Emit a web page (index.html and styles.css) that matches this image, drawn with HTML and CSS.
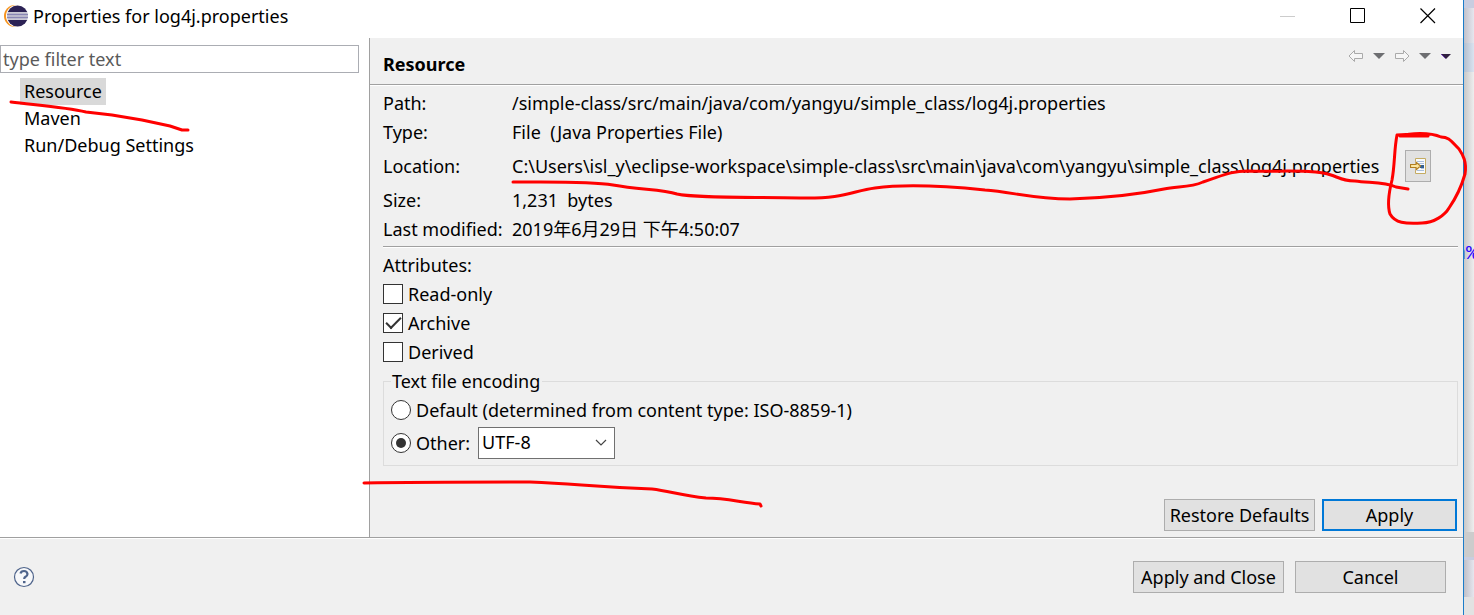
FILE: index.html
```
<!DOCTYPE html>
<html lang="en">

<head>
    <meta charset="UTF-8">
    <meta name="viewport" content="width=device-width, initial-scale=1.0">
    <title>Properties for log4j.properties</title>
    <link rel="stylesheet" href="styles.css">
</head>

<body>
    <div class="dialog">
        <!-- Title bar -->
        <header class="title-bar">
            <svg class="logo" width="24" height="24" viewBox="0 0 24 24">
                <circle cx="11" cy="12" r="11" fill="#f7941e"/>
                <circle cx="13" cy="12" r="11" fill="#fff"/>
                <circle cx="13.5" cy="12" r="10.5" fill="#2c2255"/>
                <path d="M3 9h21M3 12h21M3 15h21" stroke="#fff" stroke-width="1.5"/>
                <path d="M3 10.5h21M3 13.5h21" stroke="#8a86b4" stroke-width="1.5"/>
            </svg>
            <span class="title">Properties for log4j.properties</span>
            <button class="window-button" aria-label="Minimize" disabled>
                <svg width="16" height="16"><path d="M0 8.500h15" stroke="#ccc"/></svg>
            </button>
            <button class="window-button" aria-label="Maximize">
                <svg width="16" height="16"><path d="M.5 .5h14v14H.5z" fill="none" stroke="#000"/></svg>
            </button>
            <button class="window-button" aria-label="Close">
                <svg width="16" height="16"><path d="M.5 .5l14.5 14.5M15 .5L.5 15" stroke="#000" stroke-width="1.2"/></svg>
            </button>
        </header>

        <div class="main">
            <!-- Page list -->
            <nav class="sidebar">
                <input class="filter" type="text" placeholder="type filter text" aria-label="Filter">
                <ul class="tree">
                    <li><a class="selected" href="#">Resource</a></li>
                    <li><a href="#">Maven</a></li>
                    <li><a href="#">Run/Debug Settings</a></li>
                </ul>
            </nav>

            <!-- Resource page -->
            <section class="page">
                <div class="page-header">
                    <h1>Resource</h1>
                    <div class="history">
                        <button aria-label="Back" disabled>
                            <svg width="16" height="14"><path d="M1 7l5.500-5.500v3h8v5h-8v3z" fill="#f6f6f6" stroke="#aaa"/></svg>
                        </button>
                        <button aria-label="Back history" disabled>
                            <svg width="12" height="14"><path d="M0 4h12L6 10z" fill="#6d6e71"/></svg>
                        </button>
                        <button aria-label="Forward" disabled>
                            <svg width="16" height="14"><path d="M15 7L9.500 1.500v3h-8v5h8v3z" fill="#f6f6f6" stroke="#aaa"/></svg>
                        </button>
                        <button aria-label="Forward history" disabled>
                            <svg width="12" height="14"><path d="M0 4h12L6 10z" fill="#6d6e71"/></svg>
                        </button>
                        <button aria-label="Menu">
                            <svg width="12" height="14"><path d="M1 5h10L6 10z" fill="#30203f"/><path d="M1 5l4.500 4.500" stroke="#6a35b0"/></svg>
                        </button>
                    </div>
                </div>

                <div class="page-body">
                    <dl class="info">
                        <dt>Path:</dt>
                        <dd>/simple-class/src/main/java/com/yangyu/simple_class/log4j.properties</dd>
                        <dt>Type:</dt>
                        <dd>File&nbsp; (Java Properties File)</dd>
                        <dt class="location">Location:</dt>
                        <dd class="location">
                            <span class="location-path">C:\Users\isl_y\eclipse-workspace\simple-class\src\main\java\com\yangyu\simple_class\log4j.properties</span>
                            <button class="button show-button" aria-label="Show in system explorer">
                                <svg width="16" height="16" viewBox="0 0 16 16">
                                    <path d="M5.500 3V.5h10v15h-10V13" fill="#f8fafc" stroke="#c5ac62"/>
                                    <path d="M7 3.500h7M8 5.500h6M11 10.500h3M7 12.500h7" stroke="#a9bfdc"/>
                                    <path d="M10 7h4v3h-4z" fill="#315f91"/>
                                    <path d="M.5 6.500H6V4l4.500 4-4.500 4V9.500H.5z" fill="#fce6a0" stroke="#b17d20" stroke-width="1.2"/>
                                </svg>
                            </button>
                        </dd>
                        <dt>Size:</dt>
                        <dd>1,231&nbsp; bytes</dd>
                        <dt>Last modified:</dt>
                        <dd>2019年6月29日 下午4:50:07</dd>
                    </dl>

                    <div class="attributes">
                        <div>Attributes:</div>
                        <label><input type="checkbox">Read-only</label>
                        <label><input type="checkbox" checked>Archive</label>
                        <label><input type="checkbox">Derived</label>
                    </div>

                    <fieldset class="encoding">
                        <legend>Text file encoding</legend>
                        <label><input type="radio" name="encoding">Default (determined from content type: ISO-8859-1)</label>
                        <div class="other">
                            <label><input type="radio" name="encoding" checked>Other:</label>
                            <div class="combo">
                                <select aria-label="Encoding">
                                    <option>UTF-8</option>
                                </select>
                                <svg class="chevron" width="12" height="8"><path d="M1 1l5 5 5-5" fill="none" stroke="#444" stroke-width="1.2"/></svg>
                            </div>
                        </div>
                    </fieldset>

                    <div class="page-buttons">
                        <button class="button">Restore Defaults</button>
                        <button class="button primary">Apply</button>
                    </div>
                </div>
            </section>
        </div>

        <!-- Dialog buttons -->
        <footer class="footer">
            <button class="help" aria-label="Help">
                <svg width="22" height="22" viewBox="0 0 22 22">
                    <circle cx="11" cy="11" r="9.5" fill="#f7f8fa" stroke="#4f648b" stroke-width="1.2"/>
                    <path d="M7.500 7.500Q8 5 11 5t3.500 3q0 1.500-2 2.800-1.300.8-1.300 2.200" fill="none" stroke="#4f648b" stroke-width="2.2"/>
                    <path d="M10 15h2.500v2.200H10z" fill="#4f648b"/>
                </svg>
            </button>
            <button class="button">Apply and Close</button>
            <button class="button">Cancel</button>
        </footer>
    </div>

    <!-- Editor window behind the dialog -->
    <div class="editor">
        <div class="editor-toolbar"></div>
        <div class="editor-tabs"></div>
        <div class="editor-code"><span>n%</span></div>
        <div class="editor-scroll"></div>
        <div class="editor-status"></div>
    </div>

    <!-- Red pen marks -->
    <svg class="marks" width="1474" height="615" viewBox="0 0 1474 615">
        <path d="M11 102C35 105 65 107 86 112L112 115L142 120L170 126L182 130L188 130"/>
        <path d="M513 182C548 182 590 181 613 185C640 190 662 189 677 194C695 198 740 197 800 198C845 199 852 191 875 188C905 184 945 186 985 190C1012 192 1034 199 1070 199C1108 198 1140 194 1164 189C1177 186 1190 188 1203 182C1222 176 1230 171 1248 171C1280 172 1315 169 1331 175C1342 179 1345 181 1355 181C1370 183 1385 182 1396 187L1408 189"/>
        <path d="M1428 136C1415 136 1412 133 1397 135C1394 150 1395 164 1392 180C1388 196 1388 208 1390 214C1395 223 1405 224 1422 223C1434 223 1445 215 1449 208C1456 198 1461 188 1465 174C1467 162 1463 155 1459 149C1451 141 1449 137 1441 137C1430 132 1410 133 1400 136L1428 136"/>
        <path d="M364 483C420 482 480 482 530 482C580 484 590 487 652 489C670 491 682 496 706 498C728 498 742 503 760 504L761 506"/>
    </svg>
</body>

</html>
```
FILE: styles.css
```
* {
    box-sizing: border-box;
}

body {
    font-family: "Noto Sans", "Noto Sans CJK SC", sans-serif;
    font-size: 18px;
    line-height: 24px;
    color: #000;
    margin: 0;
    min-height: 100vh;
    display: flex;
    position: relative;
    overflow: hidden;
}

button, input, select {
    font: inherit;
    color: inherit;
}

button {
    border: none;
    background: none;
    padding: 0;
}

svg {
    display: block;
}

.dialog {
    flex: 1;
    min-width: 0;
    display: flex;
    flex-direction: column;
    background: #f0f0f0;
    border-right: 1px solid #1c7cc9;
}

/* Title bar */
.title-bar {
    height: 38px;
    display: flex;
    align-items: center;
    background: #fff;
    padding: 0 0 7px 4px;
}

.title {
    flex: 1;
    padding-left: 5px;
}

.window-button {
    width: 70px;
    display: flex;
    justify-content: center;
}

.main {
    flex: 1;
    display: flex;
}

/* Page list */
.sidebar {
    width: 370px;
    background: #fff;
    border-right: 1px solid #a0a0a0;
    padding: 7px 10px 0 0;
}

.filter {
    display: block;
    width: 100%;
    height: 28px;
    border: 1px solid #abadb3;
    padding: 0 2px;
}

.filter::placeholder {
    color: #5a5a5a;
}

.tree {
    list-style: none;
    margin: 5px 0 0;
    padding: 0 0 0 20px;
}

.tree a {
    display: inline-block;
    padding: 0 4px;
    line-height: 27px;
    vertical-align: top;
    color: #000;
    text-decoration: none;
}

.tree .selected {
    background: #d9d9d9;
}

/* Resource page */
.page {
    flex: 1;
    min-width: 0;
    display: flex;
    flex-direction: column;
}

.page-header {
    height: 48px;
    display: flex;
    justify-content: space-between;
    padding: 0 11px 0 13px;
    border-bottom: 1px solid #fff;
    box-shadow: inset 0 -1px #a0a0a0;
}

.page-header h1 {
    margin: 0;
    font-size: 18px;
    line-height: 52px;
}

.history {
    display: flex;
    gap: 9px;
    padding-top: 11px;
    align-items: flex-start;
}

.page-body {
    flex: 1;
    display: flex;
    flex-direction: column;
    padding: 5px 5px 6px 13px;
}

.info {
    display: grid;
    grid-template-columns: 124px 1fr;
    column-gap: 5px;
    row-gap: 5px;
    margin: 0;
    padding-bottom: 5px;
    border-bottom: 1px solid #a0a0a0;
    box-shadow: 0 1px #fff;
    white-space: nowrap;
}

.info dd {
    margin: 0;
}

.info .location {
    height: 34px;
    display: flex;
    align-items: center;
}

.location-path {
    width: 883px;
}

.button {
    height: 32px;
    min-width: 151px;
    background: #e1e1e1;
    border: 1px solid #adadad;
    white-space: nowrap;
}

.show-button {
    min-width: 26px;
    margin-left: 10px;
    display: flex;
    align-items: center;
    justify-content: center;
}

.attributes {
    display: flex;
    flex-direction: column;
    align-items: flex-start;
    gap: 5px;
    padding: 6px 0 5px;
}

label {
    display: flex;
    align-items: center;
    gap: 5px;
}

input[type="checkbox"], input[type="radio"] {
    appearance: none;
    width: 20px;
    height: 20px;
    margin: 0;
    background: #fff;
    border: 1px solid #333;
    display: grid;
    place-items: center;
}

input[type="radio"] {
    border-radius: 50%;
}

input[type="checkbox"]:checked::before {
    content: "";
    width: 13px;
    height: 6px;
    border: solid #333;
    border-width: 0 0 2px 2px;
    transform: translateY(-2px) rotate(-45deg);
}

input[type="radio"]:checked::before {
    content: "";
    width: 10px;
    height: 10px;
    border-radius: 50%;
    background: #333;
}

.encoding {
    margin: 0;
    padding: 5px 7px 6px;
    border: 1px solid #dcdcdc;
}

.encoding legend {
    padding: 0 2px 0 1px;
}

.other {
    display: flex;
    align-items: center;
    gap: 8px;
    margin-top: 5px;
}

.combo {
    position: relative;
}

.combo select {
    appearance: none;
    display: block;
    width: 137px;
    height: 32px;
    padding: 0 3px 2px;
    background: #fff;
    border: 1px solid #707070;
    border-radius: 0;
}

.chevron {
    position: absolute;
    right: 8px;
    top: 12px;
    pointer-events: none;
}

.page-buttons {
    display: flex;
    justify-content: flex-end;
    gap: 7px;
    margin-top: auto;
    padding-right: 1px;
}

.primary {
    min-width: 135px;
    border: 2px solid #0078d7;
}

/* Dialog buttons */
.footer {
    display: flex;
    align-items: center;
    gap: 11px;
    padding: 23px 17px 22px 13px;
    border-top: 1px solid #a0a0a0;
    box-shadow: inset 0 1px #fff;
}

.help {
    margin-right: auto;
}

/* Editor window behind the dialog */
.editor {
    width: 10px;
    display: flex;
    flex-direction: column;
    overflow: hidden;
    background: linear-gradient(to right, #c8c8c8, #eee);
    color: #2a00ff;
}

.editor-toolbar {
    height: 43px;
    background: linear-gradient(to right, #c2c2cb, #e6e6ee);
    border-top: 8px solid #c8cde0;
}

.editor-tabs {
    height: 29px;
    background: linear-gradient(to right, #b4bfce, #dae3f0);
}

.editor-code {
    flex: 1;
    padding-top: 170px;
    font-family: "Liberation Mono", monospace;
    font-size: 20px;
}

.editor-code span {
    margin-left: -10px;
}

.editor-scroll {
    height: 25px;
    background: #ccc;
}

.editor-status {
    height: 58px;
    background: linear-gradient(to right, #c0c0c8, #e6e6ee);
    border-top: 3px solid #c8cde0;
    border-bottom: 18px solid #e2e2e2;
}

/* Red pen marks */
.marks {
    position: absolute;
    left: 0;
    top: 0;
    pointer-events: none;
    fill: none;
    stroke: #f00;
    stroke-width: 3px;
    stroke-linecap: round;
    stroke-linejoin: round;
}
```
